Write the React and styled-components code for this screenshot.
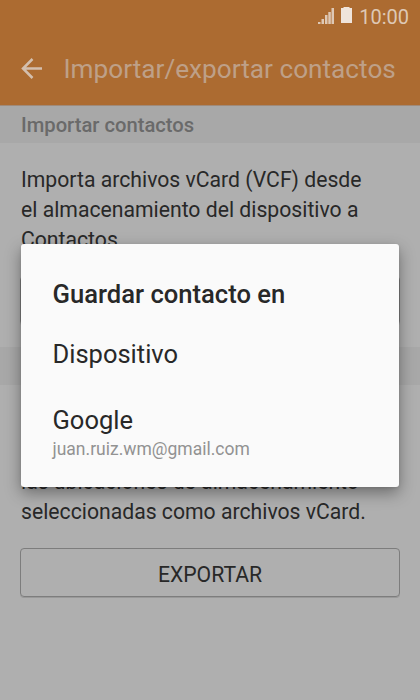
import React from 'react'
import styled, { createGlobalStyle } from 'styled-components'

const GlobalStyle = createGlobalStyle`
    * {
        box-sizing: border-box;
    }
    body {
        margin: 0;
        background: #afafaf;
        font-family: Roboto, "Liberation Sans", sans-serif;
    }
`

const Screen = styled.div`
    position: relative;
    width: 420px;
    height: 700px;
    overflow: hidden;
    background: #afafaf;
    color: #282828;
`

const Header = styled.header`
    height: 105px;
    background: #ac6b31;
`

const StatusBar = styled.div`
    display: flex;
    justify-content: flex-end;
    align-items: center;
    height: 33px;
    padding-right: 11px;
`

const Signal = styled.svg`
    margin: -1px 6px 0 0;
`

const Battery = styled.svg`
    margin: -3px 7px 0 0;
`

const Clock = styled.span`
    color: #dec8b5;
    font-size: 20px;
    line-height: 34px;
`

const TitleBar = styled.div`
    display: flex;
    align-items: center;
    height: 71px;
    padding-left: 21px;
`

const Title = styled.h1`
    margin: 0 0 0 20.5px;
    color: #bea088;
    font-size: 26.2px;
    font-weight: 400;
    line-height: 72px;
    white-space: nowrap;
`

const SectionTitle = styled.h2`
    height: 38px;
    margin: 0;
    padding-left: 21px;
    background: #a8a8a8;
    box-shadow: ${(props) => (props.$first ? 'inset 0 1px 0 #a08a79' : 'none')};
    color: #6a6a6a;
    font-size: 20.2px;
    font-weight: 500;
    line-height: 40px;
`

const SectionBody = styled.div`
    padding: 22px 20px;
`

const Description = styled.p`
    display: flex;
    flex-direction: column;
    justify-content: flex-end;
    height: ${(props) => props.$lines * 30}px;
    margin: 0 0 21px;
    padding-left: 1px;
    font-size: 21.2px;
    line-height: 30px;
    white-space: nowrap;
`

const Button = styled.button`
    display: block;
    width: 380px;
    height: 49px;
    padding: 3px 0 0;
    border: 1px solid #7d7d7d;
    border-radius: 4px;
    background: transparent;
    box-shadow: 0 1px 0 #999;
    color: #282828;
    font-family: inherit;
    font-size: 21.2px;
`

const Dialog = styled.div`
    position: absolute;
    top: 244px;
    left: 21px;
    width: 378px;
    height: 242.5px;
    padding: 32px 31.5px 0;
    border-radius: 3px;
    background: #fafafa;
    box-shadow: 0 6px 16px rgba(0, 0, 0, 0.38), 0 1px 3px rgba(0, 0, 0, 0.1);
`

const DialogTitle = styled.h3`
    margin: 0;
    font-size: 25.6px;
    font-weight: 500;
    line-height: 36px;
`

const Option = styled.div`
    margin-top: ${(props) => props.$gap}px;
    font-size: 25.5px;
    line-height: 34px;
`

const Account = styled.div`
    color: #929292;
    font-size: 17.5px;
    line-height: 25px;
`

const StatusIcons = () => (
    <>
        <Signal width="17" height="17" viewBox="0 0 17 17" fill="#dec8b5">
            <rect x="0" y="14" width="2.5" height="2" />
            <rect x="3.5" y="11" width="2.5" height="5" />
            <rect x="7" y="7" width="2.5" height="9" />
            <rect x="10.300" y="4" width="2.5" height="12" />
            <rect x="13.500" y="0" width="2.500" height="16" />
        </Signal>
        <Battery width="11" height="16" viewBox="0 0 11 16" fill="#efe4db">
            <path d="M2.500 0h6v1H11v15H0V1h2.500z" />
        </Battery>
    </>
)

const BackArrow = () => (
    <svg width="22" height="22" viewBox="0 0 22 22" fill="none" stroke="#d3bfae" strokeWidth="2.5">
        <path d="M21 10.500H2M11.500 1L2 10.500l9.500 9.500" />
    </svg>
)

const App = () => {
    return (
        <>
            <GlobalStyle />
            <Screen>
                <Header>
                    <StatusBar>
                        <StatusIcons />
                        <Clock>10:00</Clock>
                    </StatusBar>
                    <TitleBar>
                        <BackArrow />
                        <Title>Importar/exportar contactos</Title>
                    </TitleBar>
                </Header>
                <SectionTitle $first>Importar contactos</SectionTitle>
                <SectionBody>
                    <Description $lines={3}>
                        <span>Importa archivos vCard (VCF) desde</span>
                        <span>el almacenamiento del dispositivo a</span>
                        <span>Contactos.</span>
                    </Description>
                    <Button />
                </SectionBody>
                <SectionTitle />
                <SectionBody>
                    <Description $lines={4}>
                        <span>las ubicaciones de almacenamiento</span>
                        <span>seleccionadas como archivos vCard.</span>
                    </Description>
                    <Button>EXPORTAR</Button>
                </SectionBody>
                <Dialog>
                    <DialogTitle>Guardar contacto en</DialogTitle>
                    <Option $gap={25}>Dispositivo</Option>
                    <Option $gap={32}>Google</Option>
                    <Account>juan.ruiz.wm@gmail.com</Account>
                </Dialog>
            </Screen>
        </>
    )
}

export default App
